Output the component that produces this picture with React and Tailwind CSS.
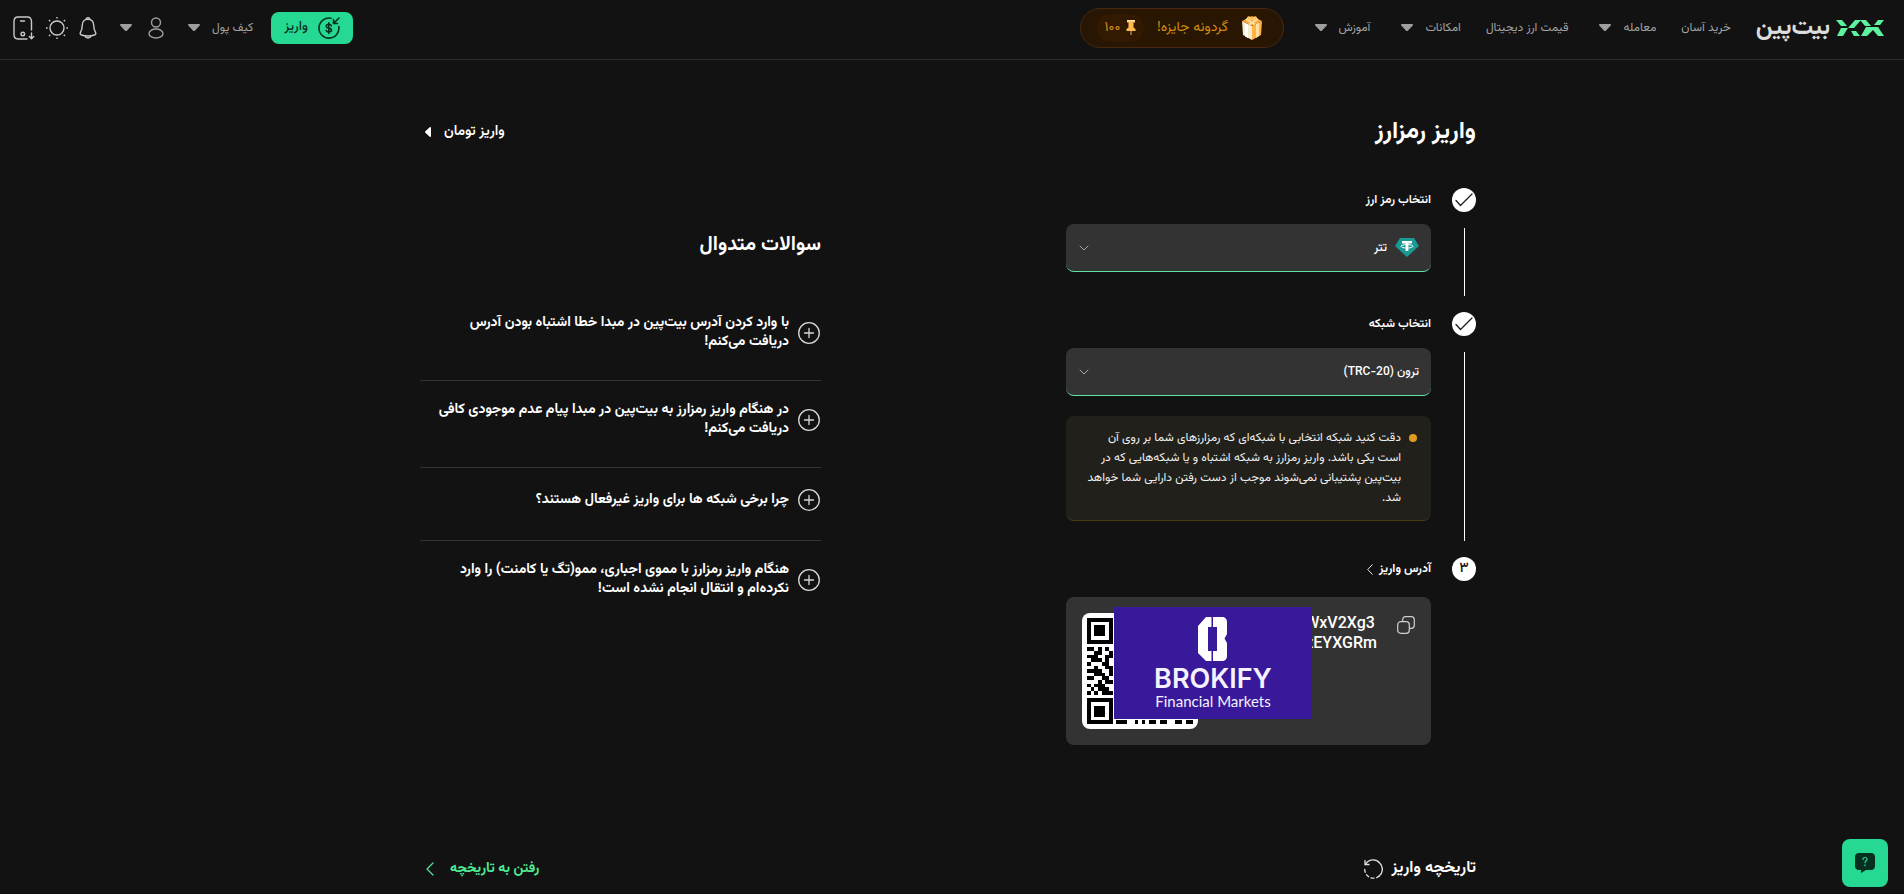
const FONT = 'font-[Vazirmatn,Roboto,"Noto_Sans",sans-serif]';

function Caret() {
  return (
    <svg width="12" height="7" viewBox="0 0 12 7" fill="#9e9e9e" aria-hidden="true">
      <path d="M1 0h10c.9 0 1.3 1 .7 1.6L7.1 6.4c-.6.7-1.600.7-2.200 0L.3 1.600C-.3 1 .1 0 1 0Z" />
    </svg>
  );
}

function NavItem({ label, menu }) {
  return (
    <a href="#" className={menu ? 'flex items-center gap-3 pl-[6px]' : 'flex items-center'}>
      {label}
      {menu && <Caret />}
    </a>
  );
}

function LogoMark() {
  return (
    <svg width="48" height="16" viewBox="0 0 48 16" fill="#5cf2a0" aria-hidden="true">
      <path d="M0 0h6l5 6H5Z" />
      <path d="M19 0h6l-7 8h-6Z" />
      <path d="M5 8h7l-5 8H1Z" />
      <path d="M24 0h6l5 6h-6Z" />
      <path d="M15 11h5l4 5h-6Z" />
      <path d="M30 7h12l6 9h-6l-5-6-6 6h-6Z" />
      <path d="M42 0h6l-4 5h-6Z" />
    </svg>
  );
}

function GiftIcon() {
  return (
    <svg width="22" height="25" viewBox="0 0 22 25" aria-hidden="true">
      <path d="M1 6 11 11v14L2 20Z" fill="#f5ead2" />
      <path d="M21 6 11 11v14l9-5Z" fill="#ffb340" />
      <path d="M1 6 11 1l10 5-10 5Z" fill="#f9a93a" />
      <path d="M4 8.500 7 10v13l-3-1.500Z" fill="#fff" />
      <path d="m15 9 3-1.500V21l-3 2Z" fill="#ffe0a0" />
      <path d="M5 4 14 9.500M17 4 8 9.500" stroke="#ffe2a8" strokeWidth="1.800" />
      <path d="M6 2.500C8 0 10 2 11 4c1-2 3-4 5-1.500.8 1.800-2 3-5 2.500-3 .5-5.800-.7-5-2.500Z" fill="#ffc766" />
    </svg>
  );
}

function PinIcon() {
  return (
    <svg width="10" height="15" viewBox="0 0 10 15" aria-hidden="true">
      <path d="M1 0h8v2.500H7.500v5L9.500 9v2h-9V9l2-1.500v-5H1Z" fill="#ffb84d" />
      <path d="M1 0h8v1.500H1Z" fill="#ffe0a8" />
      <path d="M4.300 11h1.400v4H4.300Z" fill="#b98a4a" />
    </svg>
  );
}

function DepositIcon() {
  return (
    <svg width="22" height="22" viewBox="0 0 22 22" fill="none" stroke="#06301f" strokeWidth="1.600" strokeLinecap="round" aria-hidden="true">
      <path d="M13 1.300A10 10 0 1 0 20.800 9.500" />
      <path d="M21 1l-5 5M15.500 2.500V6.500h4" />
      <path d="M13.300 8.800c-.4-1-1.300-1.500-2.500-1.500-1.500 0-2.500.8-2.500 1.900 0 2.700 5.200 1.200 5.200 3.800 0 1.200-1.100 2-2.700 2-1.300 0-2.300-.6-2.700-1.700M10.800 5.800v10.700" />
    </svg>
  );
}

function UserIcon() {
  return (
    <svg width="16" height="22" viewBox="0 0 16 22" fill="none" stroke="#9e9e9e" strokeWidth="1.400" aria-hidden="true">
      <circle cx="8" cy="5.500" r="4.500" />
      <ellipse cx="8" cy="16.500" rx="7" ry="4.500" />
    </svg>
  );
}

function BellIcon() {
  return (
    <svg width="18" height="22" viewBox="0 0 18 22" fill="none" stroke="#c9c9c9" strokeWidth="1.400" strokeLinejoin="round" strokeLinecap="round" aria-hidden="true">
      <path d="M9 2.200c-3.300 0-5.700 2.500-5.700 5.800 0 4-.7 5.300-1.800 7.300-.8 1.500-.2 2.300 1 2.700 4 1.300 9 1.300 13 0 1.200-.4 1.800-1.200 1-2.700-1.100-2-1.800-3.300-1.800-7.300 0-3.300-2.400-5.800-5.700-5.800Z" />
      <path d="M7.300 1.500c.9-.7 2.500-.7 3.400 0M6.200 19.200c.5 2.400 5.100 2.400 5.600 0" />
    </svg>
  );
}

function SunIcon() {
  return (
    <svg width="22" height="22" viewBox="0 0 22 22" fill="none" stroke="#c9c9c9" strokeWidth="1.400" aria-hidden="true">
      <circle cx="11" cy="11" r="7" />
      <path d="M11 0v1.600M11 20.400V22M0 11h1.600M20.400 11H22M3 3l1.200 1.200M17.800 17.800 19 19M3 19l1.200-1.200M17.800 4.200 19 3" />
    </svg>
  );
}

function PhoneIcon() {
  return (
    <svg width="22" height="24" viewBox="0 0 22 24" fill="none" stroke="#c9c9c9" strokeWidth="1.400" strokeLinecap="round" strokeLinejoin="round" aria-hidden="true">
      <path d="M18.500 14V5.500c0-3-1.500-4.500-4-4.500H5C2 1 1 2.500 1 5.500v13C1 21.500 2.500 23 5 23h9" />
      <path d="M7.500 5h4M18.500 17v5.500M16.300 20.500l2.200 2.300 2.200-2.300" />
      <circle cx="9.800" cy="18" r="1.800" />
    </svg>
  );
}

function StepMark({ children, last }) {
  return (
    <div className="flex flex-col items-center w-6 shrink-0">
      <span className="size-6 rounded-full bg-white text-[#121212] flex items-center justify-center text-sm font-medium shrink-0">
        {children || (
          <svg width="18" height="14" viewBox="0 0 18 14" fill="none" stroke="#1c1c1c" strokeWidth="1.300" strokeLinecap="round" strokeLinejoin="round" aria-hidden="true">
            <path d="m1 7.500 4.500 5L17 1" />
          </svg>
        )}
      </span>
      {!last && <span className="w-px bg-white grow my-4" />}
    </div>
  );
}

function Picker({ id, icon, value }) {
  return (
    <div className="flex items-center gap-2 h-12 mt-3 pr-3 pl-[13px] rounded-lg bg-[#333] border-b border-[#5fe3a0]">
      {icon}
      <select id={id} className="grow appearance-none bg-transparent text-xs font-medium text-white outline-none">
        <option>{value}</option>
      </select>
      <svg width="10" height="6" viewBox="0 0 10 6" fill="none" stroke="#a8a8a8" strokeLinecap="round" strokeLinejoin="round" className="shrink-0" aria-hidden="true">
        <path d="m1 1 4 4 4-4" />
      </svg>
    </div>
  );
}

function TetherIcon() {
  return (
    <svg width="24" height="19" viewBox="0 0 24 19" className="shrink-0" aria-hidden="true">
      <path d="M5 0h14l5 8-12 11L0 8Z" fill="#1a9a92" />
      <path d="M7 3h10v2.600h-3.600V13h-2.800V5.600H7Z" fill="#fff" />
      <ellipse cx="12" cy="8.300" rx="6" ry="1.700" fill="none" stroke="#fff" strokeWidth="1" />
    </svg>
  );
}

const QR_SIDE = ['1101010', '0011001', '1110011', '0111010', '1000110', '0010011', '1111001', '0011101', '1100110', '0001011', '1011100', '0101110', '1010111'];
const QR_BASE = [8, 9, 10, 13, 15, 17, 18, 20, 21, 24, 25, 27, 28];

function QrCode() {
  return (
    <svg width="106" height="106" viewBox="0 0 29 29" shapeRendering="crispEdges" role="img" aria-label="QR">
      {[[0, 0], [22, 0], [0, 22]].map(([x, y]) => (
        <g key={`${x}-${y}`}>
          <rect x={x + 0.5} y={y + 0.5} width="6" height="6" fill="none" stroke="#000" />
          <rect x={x + 2} y={y + 2} width="3" height="3" />
        </g>
      ))}
      {QR_SIDE.map((row, r) =>
        [...row].map((on, c) => (on === '1' ? <rect key={`${r}-${c}`} x={c} y={r + 8} width="1" height="1" /> : null))
      )}
      {QR_BASE.map((c) => (
        <rect key={c} x={c} y="28" width="1" height="1" />
      ))}
    </svg>
  );
}

function BrokifyBanner() {
  return (
    <div dir="ltr" className="absolute left-12 top-[10px] w-[198px] h-28 bg-[#38199a] text-[#f6f1ff] flex flex-col items-center pt-[10px]">
      <svg width="30" height="44" viewBox="0 0 30 44" fill="#fff" aria-hidden="true">
        <path d="M8 0h5.500v10H10v24h3.500v10H8l-8-8V9Z" />
        <path d="M15 0h9c3 0 5 2 5 5v12l-2.500 4.500L29 26v13c0 3-2 5-5 5h-9V34h4V10h-4Z" />
      </svg>
      <span className="mt-[6px] h-6 leading-6 text-[27px] font-semibold font-[Inter,sans-serif]">BROKIFY</span>
      <span className="leading-5 text-[15px] font-[Lato,sans-serif]">Financial Markets</span>
    </div>
  );
}

const QUESTIONS = [
  ['با وارد کردن آدرس بیت‌پین در مبدا خطا اشتباه بودن آدرس', 'دریافت می‌کنم!'],
  ['در هنگام واریز رمزارز به بیت‌پین در مبدا پیام عدم موجودی کافی', 'دریافت می‌کنم!'],
  ['چرا برخی شبکه ها برای واریز غیرفعال هستند؟'],
  ['هنگام واریز رمزارز با مموی اجباری، ممو(تگ یا کامنت) را وارد', 'نکرده‌ام و انتقال انجام نشده است!'],
];

function Question({ lines }) {
  return (
    <li className="pt-5 pb-7 border-b border-[#333] last:border-b-0">
      <button type="button" className="flex items-center gap-2 w-full min-h-6 text-right text-sm leading-[19px] font-bold">
        <svg width="24" height="24" viewBox="0 0 24 24" fill="none" stroke="#d8d8d8" strokeWidth="1.300" strokeLinecap="round" className="shrink-0" aria-hidden="true">
          <circle cx="12" cy="12" r="10.300" />
          <path d="M12 7.500v9M7.500 12h9" />
        </svg>
        <span>
          {lines.map((line) => (
            <span key={line} className="block whitespace-nowrap">{line}</span>
          ))}
        </span>
      </button>
    </li>
  );
}

export default function App() {
  return (
    <div dir="rtl" lang="fa" className={`min-h-screen bg-[#121212] text-white ${FONT}`}>
      <header className="h-[60px] border-b border-[#2e2e2e] flex items-center justify-between pr-5 pl-[13px] pb-1 text-xs text-[#a3a3a3] whitespace-nowrap">
        <nav className="flex items-center gap-[25px]">
          <a href="#" className="flex items-center gap-[6px]">
            <LogoMark />
            <span className="text-2xl leading-8 font-bold text-[#dcdcdc]">بیت‌پین</span>
          </a>
          <NavItem label="خرید آسان" />
          <NavItem label="معامله" menu />
          <NavItem label="قیمت ارز دیجیتال" />
          <NavItem label="امکانات" menu />
          <NavItem label="آموزش" menu />
          <a href="#" className="flex items-center justify-between w-[204px] h-10 pr-5 pl-4 rounded-full bg-[#281603] border border-[#472810] text-sm text-[#d08a14]">
            <GiftIcon />
            <span>گردونه جایزه!</span>
            <span className="flex items-center gap-[6px] h-7 px-2 rounded-full bg-[#321a02]">
              <PinIcon />
              ۱۰۰
            </span>
          </a>
        </nav>
        <div className="flex items-center">
          <button type="button" className="flex items-center gap-[10px] h-8 px-[13px] rounded-lg bg-[#26d993] text-[#06301f] text-[13px] font-medium ml-[18px]">
            <DepositIcon />
            واریز
          </button>
          <a href="#" className="flex items-center gap-3 ml-6">کیف پول <Caret /></a>
          <button type="button" aria-label="حساب کاربری" className="flex items-center gap-4 ml-[23px]"><UserIcon /><Caret /></button>
          <div className="flex items-center gap-[11px]">
            <button type="button" aria-label="اعلان‌ها"><BellIcon /></button>
            <button type="button" aria-label="پوسته"><SunIcon /></button>
            <button type="button" aria-label="اپلیکیشن"><PhoneIcon /></button>
          </div>
        </div>
      </header>

      <main className="pr-2 pt-14 pb-3">
        <div className="max-w-[1056px] mx-auto">
          <div className="flex items-center justify-between h-8">
            <h1 className="text-2xl leading-8 font-bold">واریز رمزارز</h1>
            <a href="#" className="flex items-center gap-[13px] pl-[5px] text-sm font-semibold">
              واریز تومان
              <svg width="6" height="10" viewBox="0 0 6 10" fill="#fff" aria-hidden="true"><path d="M6 .8v8.400c0 .7-.8 1-1.300.5L.4 5.700a1 1 0 0 1 0-1.400L4.700.3C5.200-.2 6 .1 6 .8Z" /></svg>
            </a>
          </div>

          <div className="flex justify-between items-start mt-10">
            <section className="w-[410px]">
              <div className="flex gap-[21px]">
                <StepMark />
                <div className="grow pb-10">
                  <label htmlFor="coin" className="block text-xs leading-6 font-semibold">انتخاب رمز ارز</label>
                  <Picker id="coin" value="تتر" icon={<TetherIcon />} />
                </div>
              </div>
              <div className="flex gap-[21px]">
                <StepMark />
                <div className="grow pb-9">
                  <label htmlFor="network" className="block text-xs leading-6 font-semibold">انتخاب شبکه</label>
                  <Picker id="network" value="ترون (TRC-20)" />
                  <div className="flex gap-2 mt-5 py-3 px-[14px] rounded-lg bg-[#21201b] border-b border-[#4a3b12] text-xs leading-5 text-[#f0f0f0]">
                    <span className="size-2 rounded-full bg-[#e09a20] mt-[6px] shrink-0" />
                    <p className="whitespace-nowrap">
                      دقت کنید شبکه انتخابی با شبکه‌ای که رمزارزهای شما بر روی آن<br />
                      است یکی باشد. واریز رمزارز به شبکه اشتباه و یا شبکه‌هایی که در<br />
                      بیت‌پین پشتیبانی نمی‌شوند موجب از دست رفتن دارایی شما خواهد<br />
                      شد.
                    </p>
                  </div>
                </div>
              </div>
              <div className="flex gap-[21px]">
                <StepMark last>۳</StepMark>
                <div className="grow">
                  <h2 className="flex items-center gap-[6px] text-xs leading-6 font-bold">
                    آدرس واریز
                    <svg width="6" height="11" viewBox="0 0 6 11" fill="none" stroke="#e5e5e5" strokeLinecap="round" strokeLinejoin="round" aria-hidden="true"><path d="m5.300.7-4.600 4.800 4.600 4.800" /></svg>
                  </h2>
                  <div className="relative flex items-start justify-between mt-4 p-4 rounded-lg bg-[#333]">
                    <div className="flex gap-5">
                      <button type="button" aria-label="کپی" className="mt-[3px] h-[18px]">
                        <svg width="18" height="18" viewBox="0 0 18 18" fill="none" stroke="#d0d0d0" strokeWidth="1.200" aria-hidden="true">
                          <rect x=".7" y="5.700" width="11.600" height="11.600" rx="3" />
                          <path d="M5.700 5.500V3.700c0-2 1-3 3-3h5.600c2 0 3 1 3 3v5.600c0 2-1 3-3 3h-1.800" />
                        </svg>
                      </button>
                      <p dir="ltr" className="text-left text-base leading-5 font-medium font-[Roboto,sans-serif]">WxV2Xg3<br />zEYXGRm</p>
                    </div>
                    <div className="size-[116px] p-[5px] rounded-lg bg-white"><QrCode /></div>
                    <BrokifyBanner />
                  </div>
                </div>
              </div>
            </section>

            <section className="w-[401px] pt-[43px]">
              <h2 className="text-xl leading-7 font-bold">سوالات متدوال</h2>
              <ul className="mt-[35px]">
                {QUESTIONS.map((lines) => <Question key={lines[0]} lines={lines} />)}
              </ul>
            </section>
          </div>

          <div className="flex items-center justify-between h-6 mt-28">
            <h2 className="flex items-center gap-2 text-base leading-6 font-bold">
              تاریخچه واریز
              <svg width="19" height="20" viewBox="0 0 19 20" fill="none" stroke="#e0e0e0" strokeWidth="1.300" strokeLinecap="round" aria-hidden="true">
                <path d="M1.500 5.300A8.700 8.700 0 0 1 15.700 4a8.700 8.700 0 0 1-.5 13" />
                <path d="M1 1.500v4h4" />
                <path d="M15.200 17A8.700 8.700 0 0 1 .8 9.500" strokeDasharray="3 2.600" />
              </svg>
            </h2>
            <a href="#" className="flex items-center gap-4 pl-[6px] text-sm font-bold text-[#4fec96]">
              رفتن به تاریخچه
              <svg width="8" height="14" viewBox="0 0 8 14" fill="none" stroke="#4fec96" strokeWidth="1.200" strokeLinecap="round" strokeLinejoin="round" aria-hidden="true"><path d="M7 1 1 7l6 6" /></svg>
            </a>
          </div>
        </div>
      </main>

      <button type="button" aria-label="پشتیبانی" className="fixed right-4 bottom-[7px] w-[46px] h-12 rounded-lg bg-[#26d993] flex items-center justify-center">
        <svg width="20" height="20" viewBox="0 0 20 20" aria-hidden="true">
          <path d="M4 0h12c2.500 0 4 1.500 4 4v9c0 2.500-1.500 4-4 4h-5l-5 3v-3H4c-2.500 0-4-1.500-4-4V4c0-2.500 1.500-4 4-4Z" fill="#06301f" />
          <path d="M8 6.500C8 5.200 8.900 4.500 10 4.500s2 .7 2 1.900c0 1.600-2 1.700-2 3.300M10 11.800v1" fill="none" stroke="#26d993" strokeWidth="1.200" strokeLinecap="round" />
        </svg>
      </button>
    </div>
  );
}
